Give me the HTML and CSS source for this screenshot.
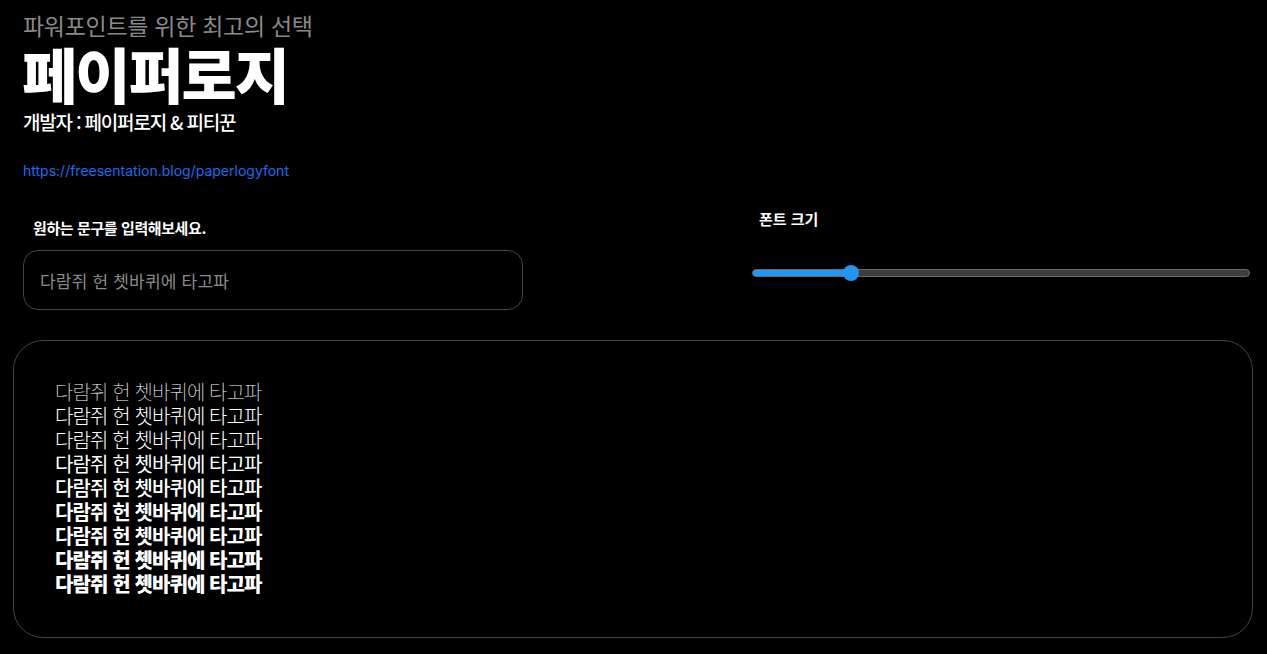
FILE: index.html
```html
<!DOCTYPE html>
<html lang="ko">
<head>
<meta charset="utf-8">
<title>페이퍼로지</title>
<link rel="stylesheet" href="styles.css">
</head>
<body>
<header class="header">
  <p class="subtitle">파워포인트를 위한 최고의 선택</p>
  <h1 class="title">페이퍼로지</h1>
  <p class="credit">개발자 : 페이퍼로지 &amp; 피티꾼</p>
  <a class="link" href="#">https://freesentation.blog/paperlogyfont</a>
</header>
<section class="controls">
  <div class="field">
    <label class="field-label">원하는 문구를 입력해보세요.</label>
    <input class="text-input" type="text" placeholder="다람쥐 헌 쳇바퀴에 타고파">
  </div>
  <div class="field field-right">
    <label class="field-label size-label">폰트 크기</label>
    <input class="range" type="range" min="0" max="1000" value="187">
  </div>
</section>
<section class="preview">
  <p class="line w1">다람쥐 헌 쳇바퀴에 타고파</p>
  <p class="line w2">다람쥐 헌 쳇바퀴에 타고파</p>
  <p class="line w3">다람쥐 헌 쳇바퀴에 타고파</p>
  <p class="line w4">다람쥐 헌 쳇바퀴에 타고파</p>
  <p class="line w5">다람쥐 헌 쳇바퀴에 타고파</p>
  <p class="line w6">다람쥐 헌 쳇바퀴에 타고파</p>
  <p class="line w7">다람쥐 헌 쳇바퀴에 타고파</p>
  <p class="line w8">다람쥐 헌 쳇바퀴에 타고파</p>
  <p class="line w9">다람쥐 헌 쳇바퀴에 타고파</p>
</section>
</body>
</html>
```
FILE: styles.css
```css
* { box-sizing: border-box; }
html, body { margin: 0; padding: 0; background: #000; }
body {
  font-family: "Noto Sans CJK KR", "Noto Sans", sans-serif;
  color: #fff;
  width: 1267px;
  height: 654px;
  overflow: hidden;
}
.header {
  padding: 9px 23px 0;
  display: flex;
  flex-direction: column;
  align-items: flex-start;
}
.subtitle {
  margin: 0;
  font-size: 23px;
  line-height: 32px;
  letter-spacing: -0.3px;
  color: #8a8a8a;
  font-weight: 400;
}
.title {
  margin: -4px 0 0 -1px;
  font-size: 60px;
  line-height: 72px;
  letter-spacing: -2px;
  font-weight: 900;
}
.credit {
  margin: 0;
  font-size: 19px;
  line-height: 26px;
  letter-spacing: -1.2px;
  font-weight: 500;
}
.link {
  margin-top: 27px;
  font-family: "Inter", "Noto Sans", sans-serif;
  font-size: 14px;
  line-height: 18px;
  letter-spacing: 0;
  color: #1a6cf0;
  text-decoration: none;
}
.controls {
  display: flex;
  justify-content: space-between;
  align-items: flex-start;
  padding: 0 17px 0 23px;
  margin-top: 38px;
}
.field {
  display: flex;
  flex-direction: column;
  width: 500px;
}
.field-right {
  width: 498px;
  margin-top: -9px;
}
.field-label {
  font-size: 15px;
  line-height: 20px;
  letter-spacing: -0.4px;
  font-weight: 700;
  padding-left: 10px;
}
.size-label {
  padding-left: 7px;
  letter-spacing: 0;
}
.text-input {
  margin-top: 12px;
  width: 500px;
  height: 60px;
  border: 1px solid #444;
  border-radius: 15px;
  background: #000;
  padding: 0 16px;
  font-family: "Noto Sans CJK KR", sans-serif;
  font-size: 17px;
  letter-spacing: 0.2px;
  color: #fff;
  outline: none;
}
.text-input::placeholder { color: #8a8a8a; }
.range {
  -webkit-appearance: none;
  appearance: none;
  margin: 40px 0 0;
  width: 498px;
  height: 8px;
  border-radius: 4px;
  border: 1px solid #6b6b6b;
  background: linear-gradient(to right, #2196f3 0%, #2196f3 19.7%, #3d3d3d 19.7%, #3d3d3d 100%);
  outline: none;
}
.range::-webkit-slider-thumb {
  -webkit-appearance: none;
  appearance: none;
  width: 16px;
  height: 16px;
  border-radius: 50%;
  background: #2196f3;
  border: none;
}
.preview {
  margin: 30px 14px 0 13px;
  height: 298px;
  border: 1px solid #444;
  border-radius: 30px;
  padding: 39px 41px;
}
.line {
  margin: 0;
  font-size: 20px;
  line-height: 24px;
  letter-spacing: -0.9px;
  color: #fff;
}
.w1 { font-weight: 100; }
.w2 { font-weight: 200; }
.w3 { font-weight: 300; }
.w4 { font-weight: 400; }
.w5 { font-weight: 500; }
.w6 { font-weight: 600; }
.w7 { font-weight: 700; }
.w8 { font-weight: 800; }
.w9 { font-weight: 900; }
```
